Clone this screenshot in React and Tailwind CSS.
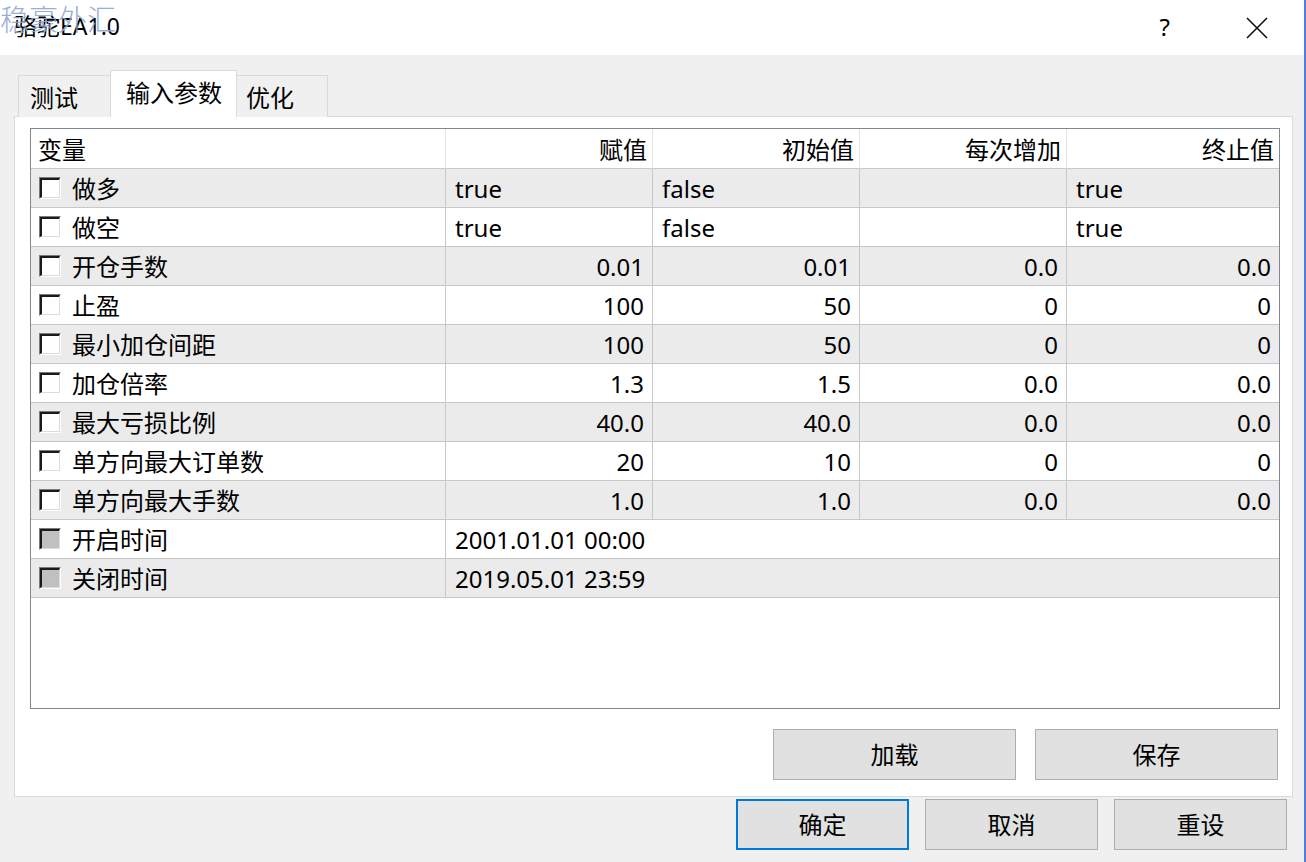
import React from "react";

const rows = [
  { name: "做多", v: ["true", "false", "", "true"], left: true },
  { name: "做空", v: ["true", "false", "", "true"], left: true },
  { name: "开仓手数", v: ["0.01", "0.01", "0.0", "0.0"] },
  { name: "止盈", v: ["100", "50", "0", "0"] },
  { name: "最小加仓间距", v: ["100", "50", "0", "0"] },
  { name: "加仓倍率", v: ["1.3", "1.5", "0.0", "0.0"] },
  { name: "最大亏损比例", v: ["40.0", "40.0", "0.0", "0.0"] },
  { name: "单方向最大订单数", v: ["20", "10", "0", "0"] },
  { name: "单方向最大手数", v: ["1.0", "1.0", "0.0", "0.0"] },
  { name: "开启时间", date: "2001.01.01 00:00", disabled: true },
  { name: "关闭时间", date: "2019.05.01 23:59", disabled: true },
];

function Check({ disabled }) {
  return (
    <div className="w-[22px] h-[22px] border-t border-l border-t-[#7a7a7a] border-l-[#7a7a7a] border-b border-r border-b-white border-r-white shrink-0">
      <div
        className={
          "w-full h-full border-t-2 border-l-2 border-t-[#1a1a1a] border-l-[#1a1a1a] border-b border-r border-b-[#dcdcdc] border-r-[#dcdcdc] " +
          (disabled ? "bg-[#c0c0c0]" : "bg-white")
        }
      />
    </div>
  );
}

function Btn({ children, className = "", primary = false }) {
  return (
    <div
      className={
        "flex items-center justify-center bg-[#e1e1e1] text-[24px] leading-none text-black " +
        (primary ? "border-2 border-[#0078d7] " : "border border-[#adadad] ") +
        className
      }
    >
      {children}
    </div>
  );
}

export default function App() {
  return (
    <div className="relative w-[1306px] h-[862px] overflow-hidden bg-[#f0f0f0] font-['Noto_Sans','Noto_Sans_CJK_SC',sans-serif] text-black">
      {/* title bar */}
      <div className="relative h-[55px] bg-white flex items-center pl-[14px] pr-[38px]">
        <div className="text-[23px] leading-none pb-[2px]">骆驼EA1.0</div>
        <div className="ml-auto flex items-center gap-[76px]">
          <div className="text-[24px] leading-none pb-[2px]">?</div>
          <svg width="22" height="22" viewBox="0 0 22 22">
            <path d="M1 1 L21 21 M21 1 L1 21" stroke="#111" strokeWidth="1.6" fill="none" />
          </svg>
        </div>
        <div className="absolute left-0 top-[5px] text-[29px] leading-none text-[#8ea6d2] font-light opacity-90 pointer-events-none">
          稳豪外汇
        </div>
      </div>

      {/* tabs */}
      <div className="pl-[18px] pt-[16px] flex items-end h-[62px] relative z-10">
        <div className="w-[92px] h-[42px] border border-[#d9d9d9] border-b-0 border-r-0 bg-[#f0f0f0] flex items-center pl-[11px] pt-[2px] text-[24px] leading-none">
          测试
        </div>
        <div className="w-[127px] h-[47px] border border-[#d9d9d9] border-b-0 bg-white flex items-center pl-[15px] pb-[2px] text-[24px] leading-none">
          输入参数
        </div>
        <div className="w-[91px] h-[42px] border border-[#d9d9d9] border-b-0 border-l-0 bg-[#f0f0f0] flex items-center pl-[9px] pt-[2px] text-[24px] leading-none">
          优化
        </div>
      </div>

      {/* panel */}
      <div className="ml-[14px] mt-[-1px] w-[1279px] h-[681px] bg-white border border-[#d9d9d9] pt-[11px] pl-[15px]">
        <div className="w-[1250px] h-[581px] border border-[#828790] bg-white">
          <div className="grid grid-cols-[415px_207px_207px_207px_212px]">
            {/* header */}
            <div className="h-[40px] border-b border-[#c8c8c8] border-r border-r-[#e5e5e5] flex items-center pl-[7px] pt-[3px] text-[24px] leading-none">
              变量
            </div>
            {["赋值", "初始值", "每次增加", "终止值"].map((h, i) => (
              <div
                key={h}
                className={
                  "h-[40px] border-b border-[#c8c8c8] flex items-center justify-end pr-[5px] pt-[3px] text-[24px] leading-none " +
                  (i < 3 ? "border-r border-r-[#e5e5e5]" : "")
                }
              >
                {h}
              </div>
            ))}

            {rows.map((r, idx) => {
              const bg = idx % 2 === 0 ? "bg-[#ebebeb]" : "bg-white";
              const cells = [
                <div
                  key="n"
                  className={"h-[39px] border-b border-r border-[#c8c8c8] flex items-center pl-[8px] gap-[11px] " + bg}
                >
                  <Check disabled={r.disabled} />
                  <span className="text-[24px] leading-none pt-[1px]">{r.name}</span>
                </div>,
              ];
              if (r.date) {
                cells.push(
                  <div
                    key="d"
                    className={"col-span-4 h-[39px] border-b border-[#c8c8c8] flex items-center pl-[9px] pt-[1px] text-[24px] leading-none " + bg}
                  >
                    {r.date}
                  </div>
                );
              } else {
                r.v.forEach((val, i) => {
                  cells.push(
                    <div
                      key={i}
                      className={
                        "h-[39px] border-b border-[#c8c8c8] flex items-center pt-[1px] text-[24px] leading-none " +
                        (i < 3 ? "border-r " : "") +
                        (r.left ? "pl-[9px] " : "justify-end pr-[8px] ") +
                        bg
                      }
                    >
                      {val}
                    </div>
                  );
                });
              }
              return <React.Fragment key={r.name}>{cells}</React.Fragment>;
            })}
          </div>
        </div>

        <div className="flex justify-end gap-[19px] pr-[14px] mt-[20px]">
          <Btn className="w-[243px] h-[51px]">加载</Btn>
          <Btn className="w-[243px] h-[51px]">保存</Btn>
        </div>
      </div>

      {/* bottom buttons */}
      <div className="flex justify-end gap-[16px] pr-[19px] mt-[2px]">
        <Btn primary className="w-[173px] h-[51px]">确定</Btn>
        <Btn className="w-[173px] h-[51px]">取消</Btn>
        <Btn className="w-[173px] h-[51px]">重设</Btn>
      </div>

      {/* screen edge line */}
      <div className="absolute top-0 left-[1304px] w-[2px] h-[862px] bg-[#4f80cf]" />
    </div>
  );
}
